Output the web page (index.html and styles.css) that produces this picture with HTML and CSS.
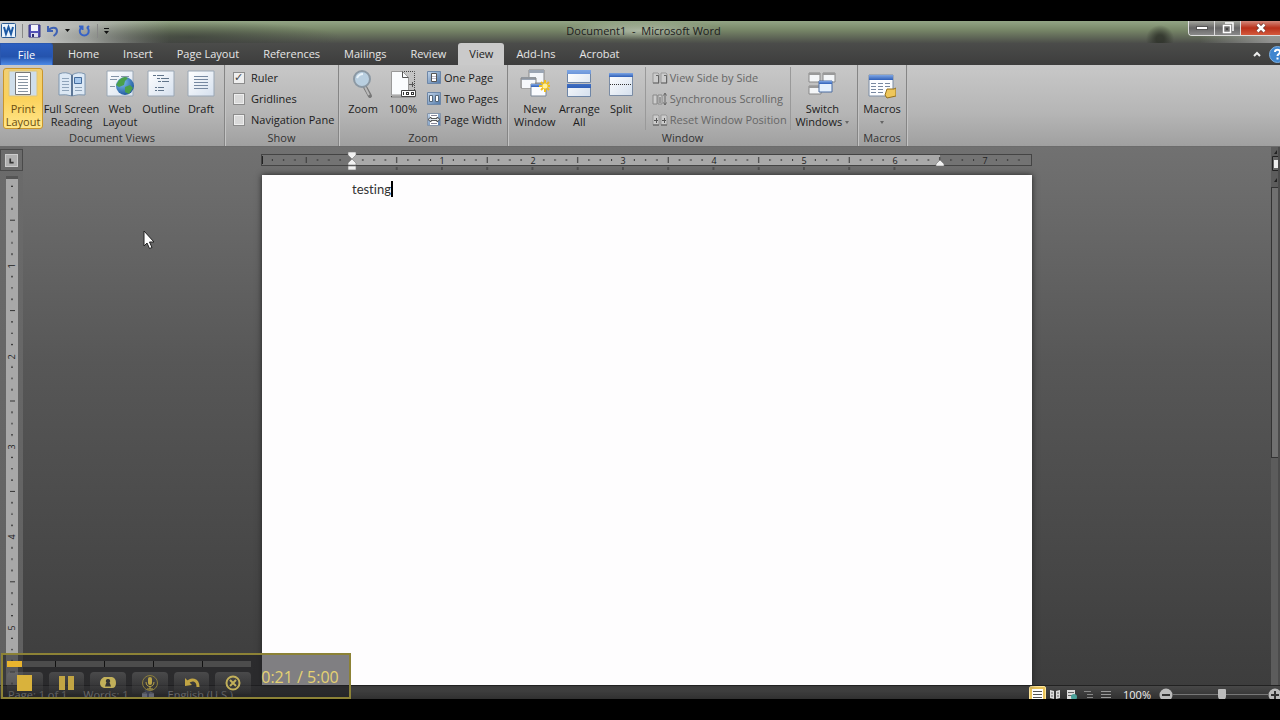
FILE: index.html
```html
<!DOCTYPE html>
<html lang="en">
<head>
<meta charset="utf-8">
<title>Document1 - Microsoft Word</title>
<link rel="stylesheet" href="styles.css">
</head>
<body>
<svg class="defs" width="0" height="0" aria-hidden="true">
  <defs>
    <linearGradient id="sheet" x1="0" y1="0" x2="1" y2="1"><stop offset="0" stop-color="#fff"/><stop offset="1" stop-color="#d5e0ee"/></linearGradient>
    <linearGradient id="bar" x1="0" y1="0" x2="0" y2="1"><stop offset="0" stop-color="#7ea6e4"/><stop offset="1" stop-color="#2f5fb8"/></linearGradient>
    <radialGradient id="globe" cx=".35" cy=".3" r=".8"><stop offset="0" stop-color="#7fc0f0"/><stop offset="1" stop-color="#164f96"/></radialGradient>
    <linearGradient id="blueBox" x1="0" y1="0" x2="1" y2="1"><stop offset="0" stop-color="#c4d6ea"/><stop offset="1" stop-color="#4f77a8"/></linearGradient>
  </defs>
</svg>
<div class="window">
  <header class="titlebar">
    <div class="quick">
      <svg width="16" height="16" viewBox="0 0 16 16"><rect x=".5" y=".5" width="14" height="14" rx="1" fill="#e9f2fb" stroke="#2a5a92"/><path d="M3 4l2 7 2.500-7 2.500 7 2-7" fill="none" stroke="#1d5aa5" stroke-width="2"/></svg>
      <i class="sep"></i>
      <button aria-label="Save"><svg width="13" height="14" viewBox="0 0 13 14"><path d="M1 1h11v12H1z" fill="#5451b8" stroke="#35327f"/><path d="M3 1h7v6H3z" fill="#f4f4fb"/><path d="M3 9h7v4H3z" fill="#dcdcec"/><path d="M4 10h2v3H4z" fill="#2c2a70"/></svg></button>
      <button aria-label="Undo"><svg width="13" height="12" viewBox="0 0 13 12"><path d="M2 1v5h5M2.500 5.500C5 2 11 1.500 11 6c0 3-2 4-3.500 5" fill="none" stroke="#3f62b4" stroke-width="2"/></svg></button>
      <svg width="5" height="4" viewBox="0 0 5 4"><path d="M0 0h5L2.500 3z" fill="#111"/></svg>
      <button aria-label="Repeat" class="repeat"><svg width="12" height="12" viewBox="0 0 12 12"><path d="M3.500 2.500a4.500 4.500 0 1 0 5.500 0M1 1.500h3.500V5M9 3l2-2" fill="none" stroke="#3763c6" stroke-width="2"/></svg></button>
      <i class="sep"></i>
      <svg width="7" height="7" viewBox="0 0 7 7"><path d="M1 0h5v1H1zM1 3h5L3.500 6z" fill="#111"/></svg>
    </div>
    <h1 class="title">Document1&nbsp; -&nbsp; Microsoft Word</h1>
    <div class="controls">
      <button aria-label="Minimize"><svg width="12" height="5" viewBox="0 0 12 5"><rect x=".5" y=".5" width="11" height="3" fill="#fff" stroke="#555"/></svg></button>
      <button aria-label="Restore"><svg width="12" height="12" viewBox="0 0 12 12"><path d="M3 1h8v8M1.500 3.500h7v7h-7z" fill="none" stroke="#fff" stroke-width="1.500"/><path d="M4 6h2v2H4z" fill="#444"/></svg></button>
      <button aria-label="Close" class="close"><svg width="12" height="10" viewBox="0 0 12 10"><path d="M2.500 1.500l7 7M9.500 1.500l-7 7" stroke="#6a3a35" stroke-width="4"/><path d="M2.500 1.500l7 7M9.500 1.500l-7 7" stroke="#fff" stroke-width="2.500"/></svg></button>
    </div>
  </header>
  <nav class="tabs">
    <button class="tab file">File</button>
    <button class="tab home">Home</button>
    <button class="tab">Insert</button>
    <button class="tab">Page Layout</button>
    <button class="tab">References</button>
    <button class="tab">Mailings</button>
    <button class="tab">Review</button>
    <button class="tab active">View</button>
    <button class="tab">Add-Ins</button>
    <button class="tab">Acrobat</button>
    <div class="tabs-end">
      <button aria-label="Minimize ribbon"><svg width="8" height="6" viewBox="0 0 8 6"><path d="M1 5l3-3 3 3" fill="none" stroke="#eee" stroke-width="2"/></svg></button>
      <button class="help" aria-label="Help"><svg width="17" height="17" viewBox="0 0 17 17"><circle cx="8.500" cy="8.500" r="8" fill="#3f86cf" stroke="#7fb0e0"/><path d="M6 6c0-3 5-3 5 0 0 2-2.500 2-2.500 4M8.500 11.500v2" fill="none" stroke="#fff" stroke-width="2"/></svg></button>
    </div>
  </nav>
  <section class="ribbon">
    <div class="group views">
      <div class="tools">
        <button class="big print selected"><svg width="30" height="28" viewBox="0 0 30 28"><path d="M1 1h28v25H1z" fill="#cfdeeb" stroke="#dfc578"/><path d="M7.500 2.500h15v22h-15z" fill="#fdfdfd" stroke="#777"/><path d="M10 6.500h10M10 9.500h10M10 12.500h10M10 15.500h10M10 18.500h10M10 21.500h10" stroke="#8794a2"/></svg><span>Print<br>Layout</span></button>
        <button class="big full"><svg width="30" height="28" viewBox="0 0 30 28"><path d="M2 4q7-3 13 1 6-4 13-1v21q-7-1-13 1-6-2-13-1z" fill="#dce8f4" stroke="#7f97b0"/><path d="M15 5v21" stroke="#5c7696" stroke-width="2"/><path d="M5 8.500h7M5 11.500h7M5 14.500h7M5 17.500h7M5 20.500h7M18 17.500h7M18 20.500h7" stroke="#8fa4ba"/><path d="M17.500 7.500h7v6h-7z" fill="#a7c8ec" stroke="#456c9c"/></svg><span>Full Screen<br>Reading</span></button>
        <button class="big web"><svg width="28" height="28" viewBox="0 0 28 28"><path d="M1 1h26v25H1z" fill="url(#sheet)" stroke="#9aa7b5"/><path d="M5 6.500h8M15 6.500h8M4 9.500h7M4 16.500h5" stroke="#8495a8"/><circle cx="19" cy="16" r="9" fill="url(#globe)"/><path d="M13 10q5-5 9-2l-3 3-1 4-5 2-3-2zM19 17l5-2 3 3-4 6-4-2z" fill="#4aa04b"/></svg><span>Web<br>Layout</span></button>
        <button class="big outline"><svg width="28" height="28" viewBox="0 0 28 28"><path d="M1 1h26v25H1z" fill="url(#sheet)" stroke="#9aa7b5"/><path d="M6 5.500h3M10 5.500h7M10 8.500h3M14 8.500h8M11 11.500h3M15 11.500h7M8 17.500h2M11 17.500h6M8 20.500h2M11 20.500h6" stroke="#60748a"/></svg><span>Outline</span></button>
        <button class="big draft"><svg width="28" height="28" viewBox="0 0 28 28"><path d="M1 1h26v25H1z" fill="url(#sheet)" stroke="#9aa7b5"/><path d="M7 6.500h14M7 9.500h14M7 12.500h14M7 15.500h14M7 18.500h14" stroke="#7688a0"/></svg><span>Draft</span></button>
      </div>
      <h2>Document Views</h2>
    </div>
    <div class="group show">
      <div class="tools column">
        <label class="row"><input type="checkbox" checked>Ruler</label>
        <label class="row"><input type="checkbox">Gridlines</label>
        <label class="row"><input type="checkbox">Navigation Pane</label>
      </div>
      <h2>Show</h2>
    </div>
    <div class="group zoom">
      <div class="tools">
        <button class="big lens"><svg width="28" height="28" viewBox="0 0 28 28"><path d="M16 17l5 9" stroke="#777" stroke-width="4" stroke-linecap="round"/><path d="M16 17l4 8" stroke="#bbb" stroke-width="2"/><circle cx="13" cy="9" r="8" fill="#b9cfe0" stroke="#8b98a3" stroke-width="2"/><path d="M8 8q2-4 6-4" fill="none" stroke="#e9f3fa" stroke-width="2"/></svg><span>Zoom</span></button>
        <button class="big hundred"><svg width="26" height="28" viewBox="0 0 26 28"><path d="M1.500 27V1.500h23V27z" fill="none" stroke="#444" stroke-dasharray="1 1"/><path d="M1.500 1.500h11l6 6V25h-17z" fill="#fafcfe" stroke="#999"/><path d="M12.500 1.500v6h6M19 14.500h5M22.500 12v5" fill="none" stroke="#555"/><path d="M11.500 20.500h14v6h-14z" fill="#fff" stroke="#444"/><path d="M13.500 22v3M16.500 22v3M18.500 22v3M16 22.500h3M16 24.500h3M21.500 22v3M23.500 22v3M21 22.500h3M21 24.500h3" fill="none" stroke="#333"/></svg><span>100%</span></button>
        <div class="column">
          <button class="row"><svg width="14" height="14" viewBox="0 0 14 14"><path d="M.5.5h13v12H.5z" fill="url(#blueBox)" stroke="#6d87a8"/><path d="M4.500 2.500h5v8h-5z" fill="#fff" stroke="#555"/><path d="M5 5.500h4M5 7.500h4" stroke="#bbc"/></svg>One Page</button>
          <button class="row"><svg width="14" height="14" viewBox="0 0 14 14"><path d="M.5.5h13v12H.5z" fill="url(#blueBox)" stroke="#6d87a8"/><path d="M2.500 3.500h3v6h-3zM8.500 3.500h3v6h-3z" fill="#fff" stroke="#567"/></svg>Two Pages</button>
          <button class="row"><svg width="14" height="14" viewBox="0 0 14 14"><path d="M.5.5h13v12H.5z" fill="url(#blueBox)" stroke="#8795a8"/><path d="M3 1h8v11H3z" fill="#fff"/><path d="M4 2.500h6M4 10.500h6" stroke="#889"/><path d="M1 6.500l3-2.500v1.500h6V4l3 2.500L10 9V7.500H4V9z" fill="#dfe7ee" stroke="#333" stroke-width=".8"/></svg>Page Width</button>
        </div>
      </div>
      <h2>Zoom</h2>
    </div>
    <div class="group win">
      <div class="tools">
        <button class="big neww"><svg width="30" height="30" viewBox="0 0 30 30"><path d="M9 1h15v13H9z" fill="#f3f6fa" stroke="#888"/><path d="M9 1h15v3H9zM1 8h15v3H1z" fill="#9aa5b4"/><path d="M1 9h15v10H1z" fill="none" stroke="#888"/><path d="M2 11h13v8H2z" fill="#f6f8fb"/><path d="M11 15h15v12H11z" fill="#fafcff" stroke="#7b8797"/><path d="M11 15h15v3H11z" fill="url(#bar)"/><path d="M25 11v12M19 17h12M21 13l8 8M29 13l-8 8" stroke="#eebd1e" stroke-width="2"/><circle cx="25" cy="17" r="2.500" fill="#fff29a"/></svg><span>New<br>Window</span></button>
        <button class="big arrange"><svg width="24" height="30" viewBox="0 0 24 30"><path d="M.5 1.500h23v12H.5zM.5 15.500h23v12H.5z" fill="url(#sheet)" stroke="#6f86a6"/><path d="M0 1h24v4H0zM0 15h24v4H0z" fill="url(#bar)"/></svg><span>Arrange<br>All</span></button>
        <button class="big split"><svg width="24" height="30" viewBox="0 0 24 30"><path d="M.5 4.500h23v22H.5z" fill="url(#sheet)" stroke="#7b8ca4"/><path d="M0 4h24v4H0z" fill="url(#bar)"/><path d="M1 15.500h22" stroke="#333" stroke-dasharray="1 1"/></svg><span>Split</span></button>
        <div class="column disabled">
          <button class="row" disabled><svg width="16" height="14" viewBox="0 0 16 14"><path d="M1 2h5l1 1v9H1zM9 2h5l1 1v9H9z" fill="#ccc" stroke="#999"/><path d="M4 4.500h2.500V12M12 4.500h2.500V12M1 12h6M9 12h6" fill="none" stroke="#666"/></svg>View Side by Side</button>
          <button class="row" disabled><svg width="16" height="14" viewBox="0 0 16 14"><path d="M1 3h4v9H1zM6 3h4v9H6z" fill="#ccc" stroke="#888"/><path d="M7 6h2M7 8h2M7 10h2M13 2v11M11.500 3.500L13 1l1.500 2.500M11.500 10.500L13 13l1.500-2.500" fill="none" stroke="#666"/></svg>Synchronous Scrolling</button>
          <button class="row" disabled><svg width="16" height="14" viewBox="0 0 16 14"><path d="M1 2h5l1 1v9H1zM9 2h5l1 1v9H9z" fill="#ccc" stroke="#999"/><path d="M2 7.500h4M4.500 5v5M10 7.500h4M12.500 5v5M1 12h6M9 12h6" stroke="#555"/></svg>Reset Window Position</button>
        </div>
        <button class="big switch"><svg width="28" height="30" viewBox="0 0 28 30"><path d="M1 4h11v9H1zM15 4h12v9H15zM1 17h12v8H1z" fill="#f4f6f8" stroke="#888"/><path d="M1 4h11v2H1zM15 4h12v2H15zM1 17h12v2H1z" fill="#999"/><path d="M11 12h13v11H11z" fill="#e4f0fd" stroke="#4c6ca0"/><path d="M11 12h13v3H11z" fill="url(#bar)"/></svg><span>Switch<br>Windows <i class="drop"></i></span></button>
      </div>
      <h2>Window</h2>
    </div>
    <div class="group macros">
      <div class="tools">
        <button class="big macro"><svg width="28" height="30" viewBox="0 0 28 30"><path d="M1 6h24v21H1z" fill="#fcfdff" stroke="#7b8ca4"/><path d="M1 6h24v5H1z" fill="url(#bar)"/><path d="M3 14.500h5M10 14.500h5M17 14.500h5M3 17.500h5M10 17.500h5M17 17.500h5M3 20.500h5M10 20.500h5M3 23.500h5M10 23.500h5" stroke="#7888a0"/><path d="M19 20h7l2-1v8l-9 2-2-3z" fill="#eec65a" stroke="#95701c"/></svg><span>Macros<br><i class="drop"></i></span></button>
      </div>
      <h2>Macros</h2>
    </div>
  </section>
  <main class="workspace">
    <aside class="left">
      <button class="corner" aria-label="Tab selector"><svg width="13" height="13" viewBox="0 0 13 13"><path d="M5 4v5h4" fill="none" stroke="#333" stroke-width="2"/></svg></button>
      <svg class="vruler" width="12" height="100%" aria-label="Vertical ruler">
        <defs><pattern id="vt" width="12" height="90.400" y="-4" patternUnits="userSpaceOnUse"><path d="M5 11.300h2M5 22.600h2M5 33.900h2M4 45.200h5M5 56.500h2M5 67.800h2M5 79.100h2" stroke="#333"/></pattern></defs>
        <rect width="100%" height="100%" fill="url(#vt)"/>
        <g><text transform="translate(9 87) rotate(-90)">1</text><text transform="translate(9 178) rotate(-90)">2</text><text transform="translate(9 268) rotate(-90)">3</text><text transform="translate(9 358) rotate(-90)">4</text><text transform="translate(9 449) rotate(-90)">5</text></g>
      </svg>
    </aside>
    <div class="canvas">
      <svg class="hruler" width="772" height="24" viewBox="0 0 772 24" aria-label="Horizontal ruler">
        <defs><pattern id="ht" x="90.500" width="90.500" height="24" patternUnits="userSpaceOnUse"><path d="M11.300 11v2M22.600 11v2M33.900 11v2M45.200 9v6M56.500 11v2M67.800 11v2M79.100 11v2" stroke="#333"/></pattern>
        <pattern id="hb" x="22.600" width="45.250" height="24" patternUnits="userSpaceOnUse"><path d="M22.600 19v3" stroke="#333"/></pattern></defs>
        <rect x=".5" y="6.500" width="770" height="11" fill="#737373" stroke="#444"/>
        <rect x="91" y="7" width="588" height="10" fill="#a9a9a9"/>
        <rect x="4" y="6" width="764" height="12" fill="url(#ht)"/>
        <rect x="100" y="18" width="560" height="5" fill="url(#hb)"/>
        <path d="M1.500 8v8" stroke="#222"/>
        <g><text x="181" y="16">1</text><text x="272" y="16">2</text><text x="362" y="16">3</text><text x="453" y="16">4</text><text x="543" y="16">5</text><text x="634" y="16">6</text><text x="724" y="16">7</text></g>
        <path d="M87 4h8v3l-4 4-4-4zM91 11l4 4v2h-8v-2zM87 18h8v4h-8zM679 12l4 4v2h-8v-2z" fill="#f2f2f2" stroke="#777" stroke-width=".6"/>
      </svg>
      <article class="page"><span>testing</span><i class="caret"></i></article>
    </div>
    <aside class="scroll">
      <svg class="scroll-top" width="7" height="40" viewBox="0 0 7 40"><path d="M3 7l3-4v4zM3 35l3-4v4z" fill="#222"/><path d="M1.500 9.500H8v14H1.500z" fill="#666" stroke="#222"/><path d="M3 13h4v8H3z" fill="#eee"/></svg>
      <div class="thumb"></div>
    </aside>
    <svg class="pointer" width="14" height="20" viewBox="0 0 14 20"><path d="M1 1v15l3-3 2.500 5.500 2.500-1-2.500-5.500H11z" fill="#fff" stroke="#222"/></svg>
  </main>
  <footer class="status">
    <div class="status-inner">
      <span class="pg">Page: 1 of 1</span><span class="wd">Words: 1</span>
      <svg class="proof" width="16" height="14" viewBox="0 0 16 14"><path d="M2 5l6-2 6 2v5l-6 3-6-3z" fill="#bfc6dc"/><path d="M8 6v7M5 2l3 3 4-4" stroke="#6672a5" stroke-width="2" fill="none"/></svg>
      <span>English (U.S.)</span>
      <div class="status-right">
        <button class="mode on" aria-label="Print layout"><svg width="11" height="12" viewBox="0 0 11 12"><path d="M0 0h11v12H0z" fill="#fff"/><path d="M1 2.500h9M1 5.500h9M1 8.500h9" stroke="#555"/></svg></button>
        <button class="mode" aria-label="Reading"><svg width="10" height="12" viewBox="0 0 10 12"><path d="M0 1l4 1v8l-4-1zM10 1L6 2v8l4-1z" fill="#ddd"/><path d="M1 4h2M7 4h2M1 7h2M7 7h2" stroke="#666"/></svg></button>
        <button class="mode" aria-label="Web layout"><svg width="10" height="12" viewBox="0 0 10 12"><path d="M0 1h8v9H0z" fill="#ddd"/><path d="M1 3.500h6M1 6.500h4" stroke="#666"/><circle cx="7" cy="8" r="3" fill="#4ba29a"/></svg></button>
        <button class="mode" aria-label="Outline"><svg width="10" height="12" viewBox="0 0 10 12"><path d="M0 2.500h7M3 5.500h6M3 8.500h6" stroke="#888"/></svg></button>
        <button class="mode" aria-label="Draft"><svg width="10" height="12" viewBox="0 0 10 12"><path d="M0 2.500h10M0 5.500h10M0 8.500h10" stroke="#999"/></svg></button>
        <span class="pct">100%</span>
        <button class="round" aria-label="Zoom out"><svg width="14" height="14" viewBox="0 0 14 14"><circle cx="7" cy="7" r="6.500" fill="#bbb"/><path d="M3 7h8" stroke="#333" stroke-width="2"/></svg></button>
        <input type="range" aria-label="Zoom" min="0" max="100" value="52">
        <button class="round" aria-label="Zoom in"><svg width="14" height="14" viewBox="0 0 14 14"><circle cx="7" cy="7" r="6.500" fill="#bbb"/><path d="M3 7h8M7 3v8" stroke="#333" stroke-width="2"/></svg></button>
      </div>
    </div>
  </footer>
  <div class="recorder">
    <div class="rec-main">
      <div class="progress"><i></i><i></i><i></i><i></i><i></i></div>
      <div class="rec-buttons">
        <button aria-label="Stop"><svg width="18" height="16" viewBox="0 0 18 16"><path d="M1 0h15v16H1z" fill="#d9b23c"/></svg></button>
        <button aria-label="Pause"><svg width="18" height="16" viewBox="0 0 18 16"><path d="M1 1h6v14H1zM10 1h6v14h-6z" fill="#c2a544"/></svg></button>
        <button aria-label="Webcam"><svg width="18" height="16" viewBox="0 0 18 16"><path d="M5 2h8q4 1 4 6t-4 5H5q-4-1-4-5t4-6z" fill="#c2b05a"/><path d="M9 4a2 2 0 0 1 1.500 3.500l.5 1 1 3H6l1-3 .5-1A2 2 0 0 1 9 4z" fill="#333"/></svg></button>
        <button aria-label="Microphone"><svg width="18" height="16" viewBox="0 0 18 16"><circle cx="9" cy="8" r="7.500" fill="none" stroke="#8c7e3c"/><rect x="7" y="2" width="4" height="8" rx="2" fill="#b9a346"/><path d="M5 7c0 6 8 6 8 0M9 11v3M6 14h6" fill="none" stroke="#b9a346"/></svg></button>
        <button aria-label="Undo"><svg width="18" height="16" viewBox="0 0 18 16"><path d="M2 3v8l7-1z" fill="#c2a544"/><path d="M4 8c4-5 11-4 11 4" fill="none" stroke="#c2a544" stroke-width="3"/></svg></button>
        <button aria-label="Cancel"><svg width="18" height="16" viewBox="0 0 18 16"><circle cx="9" cy="8" r="6.500" fill="none" stroke="#c2b05a" stroke-width="2"/><path d="M6 5l6 6M12 5l-6 6" stroke="#c2b05a" stroke-width="2"/></svg></button>
      </div>
    </div>
    <div class="time">0:21 / 5:00</div>
  </div>
</div>
</body>
</html>
```

FILE: styles.css
```css
* { box-sizing: border-box; }
body { margin: 0; background: #000; font: 11px/13px "Open Sans", "Noto Sans", sans-serif; color: #1c1c1c; }
button { font: inherit; color: inherit; background: none; border: 0; padding: 0; margin: 0; }
svg { display: block; flex: none; }
h1, h2 { margin: 0; font-weight: 400; font-size: 11px; }
.defs { position: absolute; }
.window { position: relative; height: 100vh; padding: 21px 0; display: flex; flex-direction: column; overflow: hidden; }

.titlebar { height: 22px; flex: none; display: grid; grid-template-columns: 1fr auto 1fr; align-items: start;
  background: radial-gradient(circle at 1160px 18px, rgba(44,48,40,.8) 0 4px, transparent 14px), radial-gradient(ellipse 150px 16px at 190px 16px, rgba(50,54,50,.6), transparent), linear-gradient(90deg, #cfcfcf 0, #b0b3ae 90px, transparent 170px), linear-gradient(90deg, transparent 1200px, rgba(170,170,170,.7) 1270px), linear-gradient(#93a585, #788768 40%, #4c4e4a); }
.quick { display: flex; align-items: center; gap: 5px; padding-left: 1px; height: 20px; }
.quick .sep { width: 1px; height: 14px; background: #888; }
.quick button + svg { margin-left: 1px; }
.quick .repeat { margin: 0 2px 0 3px; }
.title { padding-left: 7px; background: radial-gradient(closest-side, rgba(190,200,182,.75), transparent); line-height: 19px; white-space: nowrap; }
.controls { justify-self: end; display: flex; height: 15px; border: 1px solid #ddd; border-top: 0; border-right: 0; border-radius: 0 0 0 4px; overflow: hidden; }
.controls button { width: 26px; display: flex; align-items: center; justify-content: center; background: linear-gradient(#a5a79f, #666 50%, #8a8a8a); border-right: 1px solid #ddd; }
.controls .close { width: 39px; padding: 0; border: 0; background: linear-gradient(#d48a7c, #b9301a 50%, #d45a3c); }

.tabs { height: 22px; flex: none; display: flex; background: linear-gradient(#4b4c4a, #3d3d3d); color: #e6e6e6; }
.tab { padding: 0 12px 1px; white-space: nowrap; }
.tab.file { width: 53px; padding: 0; margin-right: 3px; color: #fff; border: 1px solid #2a58b0; border-bottom: 0; border-radius: 0 3px 0 0; background: linear-gradient(#2c5fc0, #2453ad 60%, #4c8ae6); }
.tab.active { padding: 0 11px 1px; background: #cacaca; color: #222; border-radius: 3px 3px 0 0; }
.tabs-end { margin-left: auto; display: flex; align-items: center; gap: 8px; width: 27px; flex: none; }
.help { flex: none; }

.ribbon { height: 82px; flex: none; display: flex; background: linear-gradient(#c8c8c8, #b5b5b5 60%, #a0a0a0); border-bottom: 1px solid #6c6c6c; }
.group { display: flex; flex-direction: column; border-right: 1px solid #858585; box-shadow: 1px 0 #c4c4c4; }
.group h2 { text-align: center; line-height: 13px; padding-bottom: 2px; color: #333; }
.tools { flex: 1; display: flex; padding: 3px 3px 0; }
.views { width: 225px; }
.show { width: 114px; }
.zoom { width: 169px; }
.win { width: 350px; }
.macros { width: 49px; }
.big { display: flex; flex-direction: column; align-items: center; height: 61px; white-space: nowrap; padding-top: 1px; }
.big svg { height: 30px; margin-bottom: 3px; }
.print { width: 40px; }
.full { width: 57px; }
.web { width: 40px; }
.outline { width: 42px; }
.draft { width: 38px; }
.big.selected { border: 1px solid #c9962c; border-radius: 3px; background: linear-gradient(#f0cf74, #fbd25c 50%, #ffe68a); padding-top: 0; color: #6b4e10; }
.column { display: flex; flex-direction: column; }
.row { display: flex; align-items: center; height: 21px; flex: none; white-space: nowrap; }
.show .tools { padding: 2px 0 0 8px; }
.row input { appearance: none; width: 12px; height: 12px; margin: 0 6px 0 0; border: 1px solid #8c8c8c; background: #d9d9d9; box-shadow: inset 0 0 0 1px #eee; }
.row input:checked { background: #eee; }
.row input:checked::before { content: "✓"; display: block; font: 700 11px/10px "DejaVu Sans", sans-serif; color: #444; }
.lens { width: 42px; }
.hundred { width: 38px; }
.zoom .column, .win .column { margin-top: -1px; }
.zoom .column { padding-left: 5px; }
.zoom .column .row svg { margin-right: 3px; }
.neww { width: 48px; }
.arrange { width: 42px; }
.split { width: 42px; }
.disabled { margin-left: 3px; padding-left: 6px; width: 147px; border-left: 1px solid #999; border-right: 1px solid #999; height: 63px; color: #666; }
.disabled .row svg { margin-right: 2px; }
.switch { width: 64px; }
.macros .tools { padding: 3px 0 0; }
.macro { width: 48px; }
.drop { display: inline-block; border: 2px solid transparent; border-top: 3px solid #666; border-bottom: 0; vertical-align: 2px; }

.workspace { position: relative; flex: 1; min-height: 0; display: flex; background: linear-gradient(#717171, #575757 40%, #3d3d3d); }
.left { width: 23px; display: flex; flex-direction: column; align-items: center; background: linear-gradient(#6b6b6b, #606060); }
.corner { width: 23px; height: 22px; margin: 2px 0 5px; border: 1px solid #4a4a4a; display: flex; align-items: center; justify-content: center; flex: none; }
.corner svg { background: #b0b0b0; border: 1px solid #ccc; }
.vruler { flex: 1 1 0; min-height: 0; background: #a8a8a8; border-top: 3px solid #555; }
.vruler text, .hruler text { font-size: 9px; fill: #222; text-anchor: middle; }
.canvas { flex: 1; min-width: 0; display: flex; flex-direction: column; align-items: center; padding-top: 1px; }
.hruler { margin-bottom: 3px; }
.page { flex: 1; width: 100%; max-width: 770px; background: #fefdfe; padding: 6px 90px; display: flex; align-items: flex-start; font: 13px/16px Lato, sans-serif; font-variant-ligatures: none; color: #333; box-shadow: 0 0 6px #222; }
.caret { width: 2px; height: 16px; background: #000; }
.scroll { width: 9px; flex: none; background: #5c5c5c; border-right: 2px solid #4b4b4b; }
.thumb { height: 271px; border: 1px solid #333; border-right: 0; background: #707070; }
.pointer { position: absolute; left: 143px; top: 83px; }

.status { height: 14px; flex: none; overflow: hidden; background: linear-gradient(#484848, #303030); border-top: 1px solid #222; color: #ccc; }
.status-inner { height: 17px; display: flex; align-items: center; padding-left: 8px; white-space: nowrap; line-height: 10px; }
.wd { margin-left: 16px; }
.proof { margin: 0 12px 0 11px; }
.status-right { margin-left: auto; display: flex; align-items: center; flex: none; color: #eee; }
.mode { width: 17px; height: 18px; display: flex; align-items: center; justify-content: center; }
.mode.on { background: #e9c35a; border: 1px solid #ffe69a; border-radius: 2px; }
.pct { margin: 0 8px 0 9px; }
.status input { appearance: none; width: 95px; height: 14px; margin: 0; background: linear-gradient(#777, #777) center / 100% 1px no-repeat; }
.status input::-webkit-slider-thumb { appearance: none; width: 8px; height: 11px; background: #bbb; border-radius: 1px 1px 4px 4px; }
.round:last-child { margin-right: -2px; }

.recorder { position: absolute; left: 1px; bottom: 21px; width: 350px; height: 46px; border: 2px solid #8c8236; background: rgba(28,28,32,.56); display: flex; }
.rec-main { width: 248px; padding: 6px 0 0 4px; }
.progress { display: flex; height: 6px; gap: 1px; background: #111; }
.progress i { flex: 1; background: #4c4c4c; }
.progress i:first-child { background: linear-gradient(90deg, #e9b42e 15px, #4c4c4c 15px); }
.rec-buttons { display: flex; gap: 6px; margin-top: 5px; }
.rec-buttons button { flex: 1; height: 22px; border-radius: 4px 4px 0 0; background: linear-gradient(rgba(120,120,120,.4), rgba(50,50,50,.3)); display: flex; align-items: center; justify-content: center; }
.time { flex: 1; text-align: center; font: 16px/44px "Open Sans", sans-serif; color: #e6d272; white-space: nowrap; }
```
